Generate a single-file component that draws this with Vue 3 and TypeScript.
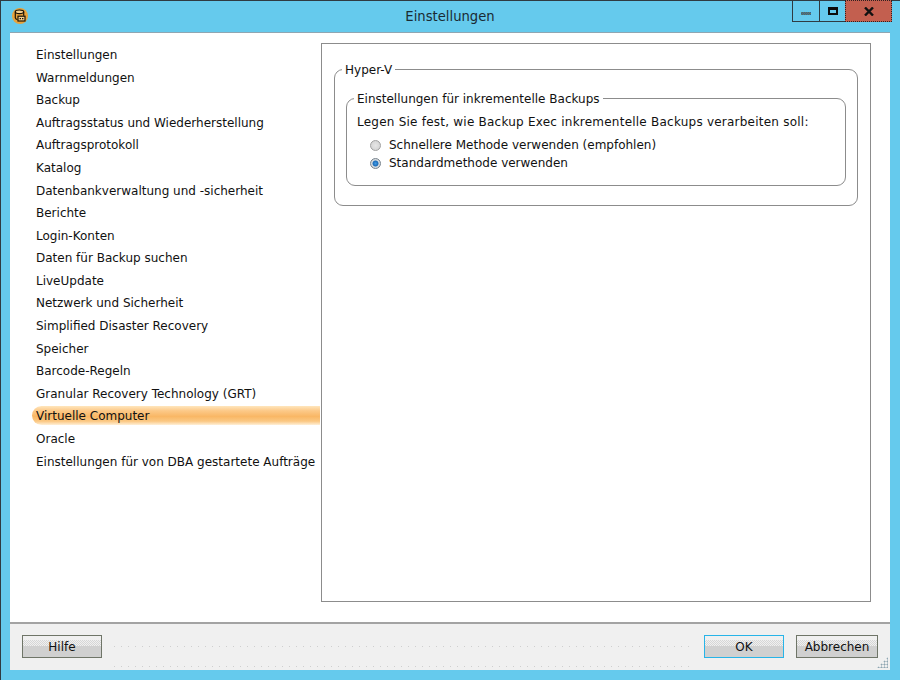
<script setup lang="ts">
const items: string[] = [
  'Einstellungen', 'Warnmeldungen', 'Backup', 'Auftragsstatus und Wiederherstellung',
  'Auftragsprotokoll', 'Katalog', 'Datenbankverwaltung und -sicherheit', 'Berichte',
  'Login-Konten', 'Daten für Backup suchen', 'LiveUpdate', 'Netzwerk und Sicherheit',
  'Simplified Disaster Recovery', 'Speicher', 'Barcode-Regeln',
  'Granular Recovery Technology (GRT)', 'Virtuelle Computer', 'Oracle',
  'Einstellungen für von DBA gestartete Aufträge',
]
const selected = 'Virtuelle Computer'
</script>

<template>
  <div class="window">
    <header class="titlebar">
      <svg class="app-icon" width="16" height="16" viewBox="0 0 16 16">
        <circle cx="8" cy="8" r="8" fill="#e8a33c" />
        <ellipse cx="7.5" cy="3.8" rx="4.2" ry="1.8" fill="#f6d08e" stroke="#1c1408" stroke-width="1.2" />
        <path d="M3.3 3.8v6c0 1 1 1.6 2.2 1.8M11.7 3.8v4" fill="none" stroke="#1c1408" stroke-width="1.2" />
        <rect x="6" y="8.2" width="7" height="4.8" fill="#f6d08e" stroke="#1c1408" stroke-width="1.2" />
        <path d="M7.6 10.6h1.4M10 10.6h1.4" stroke="#1c1408" stroke-width="1.2" />
      </svg>
      <div class="title">Einstellungen</div>
      <div class="controls">
        <div class="ctl ctl-min"><span class="min-glyph"></span></div>
        <div class="ctl ctl-max"><span class="max-glyph"></span></div>
        <div class="ctl ctl-close">
          <svg class="close-glyph" width="10" height="9" viewBox="0 0 10 9">
            <path d="M1 0.5l8 8M9 0.5l-8 8" stroke="#111" stroke-width="2.4" fill="none" />
          </svg>
        </div>
      </div>
    </header>

    <div class="client">
      <main class="content">
        <nav class="nav">
          <div v-for="item in items" :key="item" class="nav-item" :class="{ selected: item === selected }">
            {{ item }}
          </div>
        </nav>
        <section class="panel">
          <fieldset class="group outer">
            <legend>Hyper-V</legend>
            <fieldset class="group inner">
              <legend>Einstellungen für inkrementelle Backups</legend>
              <p class="intro">Legen Sie fest, wie Backup Exec inkrementelle Backups verarbeiten soll:</p>
              <label class="radio-row">
                <span class="radio"></span>
                <span>Schnellere Methode verwenden (empfohlen)</span>
              </label>
              <label class="radio-row">
                <span class="radio checked"></span>
                <span>Standardmethode verwenden</span>
              </label>
            </fieldset>
          </fieldset>
        </section>
      </main>

      <footer class="footer">
        <button class="btn">Hilfe</button>
        <div class="spacer"></div>
        <button class="btn default">OK</button>
        <button class="btn wide">Abbrechen</button>
        <span class="grip"></span>
      </footer>
    </div>
  </div>
</template>

<style>
html, body { margin: 0; padding: 0; }
</style>

<style scoped>
.window {
  width: 900px;
  height: 680px;
  box-sizing: border-box;
  background: #65caed;
  border: 1px solid #2f3b42;
  border-width: 1px 0 0 1px;
  display: flex;
  flex-direction: column;
  padding: 0 10px 10px 9px;
  font-family: "DejaVu Sans", sans-serif;
  font-size: 12px;
  color: #111;
  position: relative;
}
.titlebar {
  height: 31px;
  flex: none;
  display: flex;
  align-items: center;
  position: relative;
  padding-bottom: 1px;
  box-sizing: border-box;
}
.app-icon { margin-left: 2px; }
.title {
  position: absolute;
  left: 0;
  right: 0;
  top: 8px;
  text-align: center;
  font-size: 13.2px;
  line-height: 16px;
  color: #1a2a33;
}
.controls {
  position: absolute;
  right: -2px;
  top: -1px;
  height: 22px;
  display: flex;
}
.ctl {
  height: 22px;
  box-sizing: border-box;
  display: flex;
  align-items: center;
  justify-content: center;
  border-bottom: 1px solid #2f3b42;
  border-left: 1px solid #2f3b42;
}
.ctl-min { width: 27px; }
.ctl-max { width: 26px; }
.ctl-close {
  width: 47px;
  background: #c35f4f;
  border: 1px dotted #2f2020;
}
.min-glyph {
  width: 10px;
  height: 3px;
  margin-top: 5px;
  background: repeating-conic-gradient(#2f5f9a 0 25%, #6d7f5a 0 50%) 0 0 / 2px 2px;
}
.max-glyph { width: 6px; height: 3px; border: 2px solid #0c0c0c; border-width: 3px 2px 2px; }
.close-glyph { margin-top: 1px; }
.client {
  flex: 1;
  display: flex;
  flex-direction: column;
  min-height: 0;
  border-top: 1px solid #8fa6b2;
}
.content {
  flex: 1;
  background: #fff;
  display: flex;
  padding: 10px 19px 20px 22px;
  min-height: 0;
}
.nav {
  width: 288px;
  margin: 1.14px 1px 0 0;
  flex: none;
}
.nav-item {
  height: 22.58px;
  line-height: 22.58px;
  padding-left: 4px;
  white-space: nowrap;
  box-sizing: border-box;
  position: relative;
  isolation: isolate;
}
.nav-item.selected::before {
  content: "";
  position: absolute;
  z-index: -1;
  left: 0;
  right: 0;
  top: 0.6px;
  height: 19px;
  border-radius: 10px 0 0 10px;
  background: linear-gradient(to bottom, #ffe6bd 0%, #fcc988 25%, #f9b765 55%, #fbc883 80%, #fff0d8 100%);
}
.panel {
  flex: 1;
  border: 1px solid #8c8c8c;
  padding: 16px 12px 0;
  box-sizing: border-box;
}
.group {
  margin: 0;
  border: 1px solid #8c8c8c;
  border-radius: 9px;
}
.group legend {
  padding: 2px 3px 0;
  line-height: 16px;
}
.outer { padding: 11px 11px 19px; }
.outer > legend { margin-left: -4px; }
.inner { padding: 0 0 13px 10px; }
.inner > legend { margin-left: -3px; }
.intro { margin: 6px 0 5px; line-height: 18px; letter-spacing: 0.23px; }
.radio-row {
  display: flex;
  align-items: center;
  gap: 8px;
  height: 18px;
  padding-left: 13px;
}
.radio {
  width: 11px;
  height: 11px;
  box-sizing: border-box;
  border-radius: 50%;
  border: 1px solid #a0a0a0;
  background: radial-gradient(circle, #e6e6e6 0%, #cfcfcf 100%);
}
.radio.checked {
  border-color: #78838d;
  background: radial-gradient(circle, #3f9be6 0, #1c6bb8 2.6px, #d9dee2 3.4px, #c4cacf 100%);
}
.footer {
  height: 48px;
  flex: none;
  box-sizing: border-box;
  background: #f0f0f0;
  border-top: 2px solid #a3a3a3;
  display: flex;
  align-items: flex-start;
  padding: 11px 12px 0;
  gap: 12px;
  position: relative;
}
.spacer {
  flex: 1;
  height: 35px;
  background:
    linear-gradient(90deg, #cfcfcf 1px, transparent 1px) 0 11px / 7px 1px repeat-x,
    linear-gradient(90deg, #cfcfcf 1px, transparent 1px) 0 31px / 7px 1px repeat-x;
}
.btn {
  width: 80px;
  height: 23px;
  padding: 0;
  font: inherit;
  color: #111;
  border: 1px solid #6f7568;
  background: linear-gradient(to bottom, #f0f0f0 0 48%, #d0d0d0 48% 100%);
  position: relative;
  isolation: isolate;
}
.btn::before {
  content: "";
  position: absolute;
  z-index: -1;
  left: 0;
  right: 0;
  top: 4px;
  height: 6px;
  background: repeating-conic-gradient(#d6d6d6 0 25%, transparent 0 50%) 0 0 / 2px 2px;
}
.btn.wide { width: 82px; }
.btn.default { border-color: #27b4e8; }
.grip {
  position: absolute;
  right: 2px;
  bottom: 2px;
  width: 11px;
  height: 11px;
  background: radial-gradient(circle, #8fa6b2 45%, transparent 50%) 0 0 / 3px 3px;
  clip-path: polygon(100% 0, 100% 100%, 0 100%);
}
</style>
